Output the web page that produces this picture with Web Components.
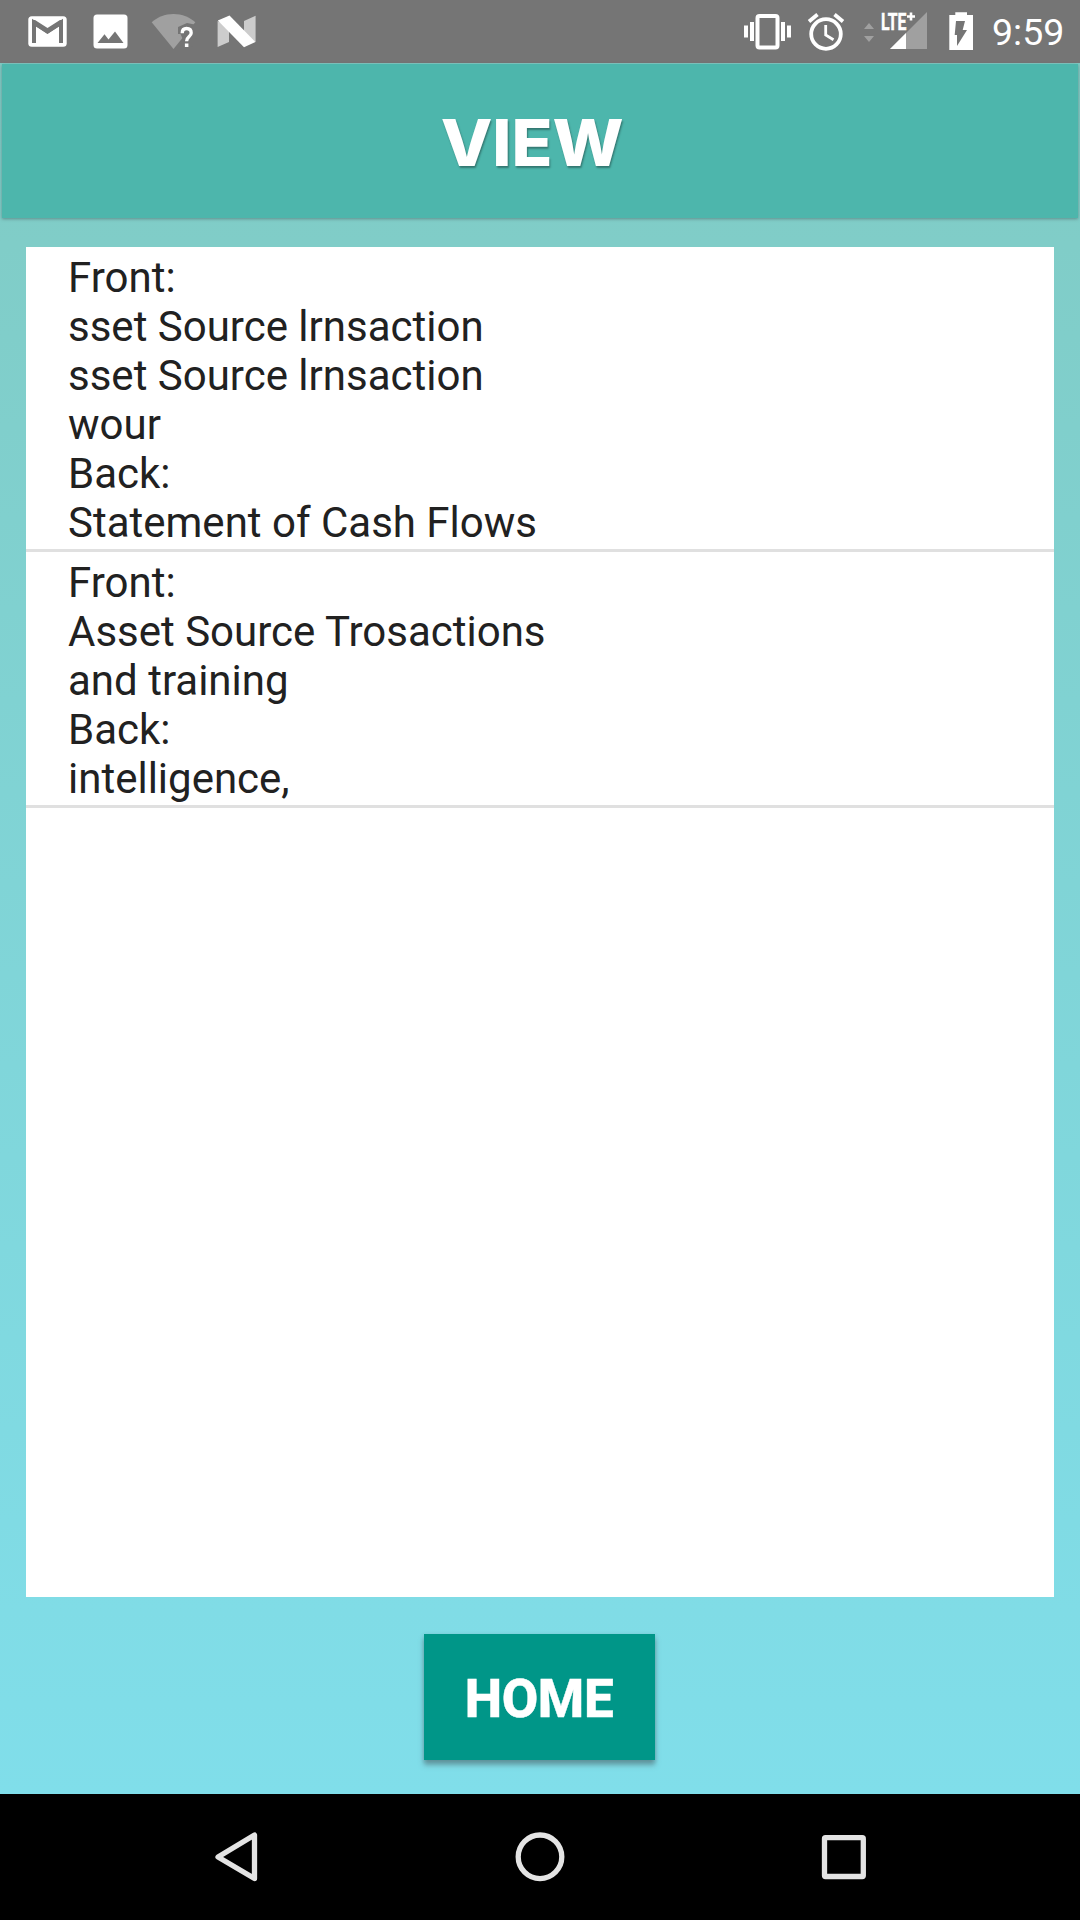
<!DOCTYPE html>
<html lang="en">
<head>
<meta charset="utf-8">
<title>View</title>
<style>
  html, body { margin: 0; height: 100%; }
  body { font-family: Roboto, sans-serif; overflow: hidden; }
</style>
</head>
<body>
<cards-app></cards-app>

<script>
// view boxes share the status bar's own 64px high coordinate space
const ICONS = {
  gmail: ["23 0 48 64", `
    <rect x="28.3" y="16.3" width="38.4" height="30.4" rx="3.5" fill="#fff"/>
    <path d="M34 43V22.5L47.5 31.5L61 22.5V43" fill="none" stroke="#757575" stroke-width="4"/>
    <path d="M32 20h3l12.5 8L60 20h3v4l-15.500 9.700L32 24z" fill="#757575"/>`],
  photo: ["86 0 48 64", `
    <rect x="93.500" y="14.500" width="34" height="34" rx="3.500" fill="#fff"/>
    <path d="M97.500 43L104.500 34.300L108.500 39.500L115 31.500L123.500 43z" fill="#757575"/>`],
  wifi: ["149 0 48 64", `
    <path d="M151.700 22.300C157 17.500 165 14 173.500 14S190 17.500 195.300 22.300L173.500 49z" fill="#a0a0a0"/>
    <path d="M178 34V27L187 23L197 25V36L191 49H183V39.500L180.500 34z" fill="#757575"/>
    <path d="M182.200 33.200C182.200 30 184 28.500 186.600 28.500C189.500 28.500 191.200 30.200 191.200 33C191.200 36.800 186.600 36.300 186.600 41.300" fill="none" stroke="#fff" stroke-width="3.300"/>
    <rect x="184.900" y="43.500" width="3.500" height="3.500" fill="#fff"/>`],
  nougat: ["212 0 48 64", `
    <path d="M217.600 21L229 27V42L217.600 47z" fill="#ccc"/>
    <path d="M244 21L255.600 15.700V42L244 36z" fill="#ccc"/>
    <path d="M217.800 20.500L229.500 15.500L255.400 42L244 47.200z" fill="#fff"/>`],
  vibrate: ["740 0 60 64", `
    <rect x="757.500" y="16" width="20" height="31.500" rx="2" fill="none" stroke="#fff" stroke-width="4"/>
    <path d="M746 25.500V37.500M752 22V41M783 22V41M789 25.500V37.500" stroke="#fff" stroke-width="4"/>`],
  alarm: ["800 0 56 64", `
    <circle cx="826" cy="34" r="14.800" fill="none" stroke="#fff" stroke-width="3.800"/>
    <path d="M825.700 25V35L833.500 39.700" fill="none" stroke="#fff" stroke-width="2.800"/>
    <path d="M809 21.500L817.500 14.500M834.500 14.500L843 21.500" stroke="#fff" stroke-width="3.800"/>`],
  signal: ["856 0 80 64", `
    <path d="M864 29L869 23L874 29zM864 36H874L869 42z" fill="#a0a0a0"/>
    <path d="M927 12V49H890z" fill="#a0a0a0"/>
    <path d="M880 8H907V12H916V21H908V31H880z" fill="#757575"/>
    <path d="M906 33V49H890z" fill="#fff"/>
    <text x="881" y="30" font-size="24.500" font-weight="700" textLength="25.500" lengthAdjust="spacingAndGlyphs" fill="#fff" stroke="#fff" stroke-width=".5">LTE</text>
    <path d="M907 16.500H915M911 12.500V20.500" stroke="#fff" stroke-width="2.600"/>`],
  battery: ["936 0 48 64", `
    <path d="M949.300 15H955.300V12.300H967V15H973V50H949.300z" fill="#fff"/>
    <path d="M956 21H965L962.700 30H967L957 46V35H954.700z" fill="#757575"/>`],
};

const NAV = {
  back: `<path d="M254.500 1835V1878.500L218 1857z"/>`,
  home: `<circle cx="540" cy="1856.800" r="21.800"/>`,
  recent: `<rect x="824.500" y="1837.700" width="38.800" height="38.800" rx="1"/>`,
};

function define(name, html) {
  customElements.define(name, class extends HTMLElement {
    constructor() {
      super();
      this.attachShadow({ mode: "open" }).innerHTML = html;
    }
  });
}

customElements.define("status-icon", class extends HTMLElement {
  connectedCallback() {
    const [box, shapes] = ICONS[this.getAttribute("name")];
    const [, , w, h] = box.split(" ");
    this.attachShadow({ mode: "open" }).innerHTML = `
      <style>:host { display: block; } svg { display: block; }</style>
      <svg width="${w}" height="${h}" viewBox="${box}">${shapes}</svg>`;
  }
});

define("status-bar", `
  <style>
    :host { display: flex; justify-content: space-between; height: 63px;
            background: #757575; color: #fff; overflow: hidden; }
    .left { display: flex; gap: 15px; padding-left: 23px; }
    .right { display: flex; padding-right: 17px; }
    time { width: 71px; margin-left: 8px; font-size: 37.500px; line-height: 65px; white-space: nowrap; }
  </style>
  <div class="left">
    <status-icon name="gmail"></status-icon>
    <status-icon name="photo"></status-icon>
    <status-icon name="wifi"></status-icon>
    <status-icon name="nougat"></status-icon>
  </div>
  <div class="right">
    <status-icon name="vibrate"></status-icon>
    <status-icon name="alarm"></status-icon>
    <status-icon name="signal"></status-icon>
    <status-icon name="battery"></status-icon>
    <time>9:59</time>
  </div>`);

define("title-bar", `
  <style>
    :host { display: flex; justify-content: center; margin: 1px 2px 0; height: 154px;
            box-sizing: border-box; padding-right: 16px; background: #4db6ac;
            box-shadow: 0 1px 3px rgba(70,90,90,.55); }
    h1 { margin: 0; font: 800 64px/157px Inter, sans-serif; color: #fff;
         text-shadow: 1px 2px 2px rgba(0,0,0,.35); transform: scaleX(1.05); }
  </style>
  <h1><slot></slot></h1>`);

define("card-list", `
  <style>
    :host { display: block; margin: 29px 26px 0; height: 1350px; background: #fff; }
  </style>
  <slot></slot>`);

define("card-item", `
  <style>
    :host { display: block; padding: 6px 42px 2px; border-bottom: 3px solid #e0e0e0;
            font-size: 42px; line-height: 49px; color: #212121; }
    slot { display: block; white-space: pre-line; }
  </style>
  <slot></slot>`);

define("raised-button", `
  <style>
    :host { display: block; align-self: center; margin: 37px 1px 0 0; }
    button { display: block; width: 231px; height: 126px; padding: 3px 1px 0 0; border: 0;
             background: #009688; color: #fff; font: 800 53px Roboto, sans-serif;
             letter-spacing: -.4px; -webkit-text-stroke: .4px #fff;
             box-shadow: 0 5px 5px rgba(70,90,95,.5), 0 1px 4px rgba(70,90,95,.2); }
  </style>
  <button><slot></slot></button>`);

customElements.define("nav-bar", class extends HTMLElement {
  connectedCallback() {
    const cell = (key, x) => `<svg width="64" height="64" viewBox="${x} 1825 64 64">${NAV[key]}</svg>`;
    this.attachShadow({ mode: "open" }).innerHTML = `
      <style>
        :host { display: flex; justify-content: center; align-items: center; gap: 240px;
                height: 126px; background: #000; }
        svg { fill: none; stroke: #e4e4e4; stroke-width: 5.300; stroke-linejoin: round; }
      </style>
      ${cell("back", 204)}${cell("home", 508)}${cell("recent", 812)}`;
  }
});

define("cards-app", `
  <style>
    :host { display: flex; flex-direction: column; width: 1080px; height: 1920px; }
    main { flex: 1; display: flex; flex-direction: column;
           background: linear-gradient(#80cbc4, #80deea); }
  </style>
  <status-bar></status-bar>
  <main>
    <title-bar>VIEW</title-bar>
    <card-list>
      <card-item>Front:
sset Source lrnsaction
sset Source lrnsaction
wour
Back:
Statement of Cash Flows</card-item>
      <card-item>Front:
Asset Source Trosactions
and training
Back:
intelligence,</card-item>
    </card-list>
    <raised-button>HOME</raised-button>
  </main>
  <nav-bar></nav-bar>`);
</script>
</body>
</html>
